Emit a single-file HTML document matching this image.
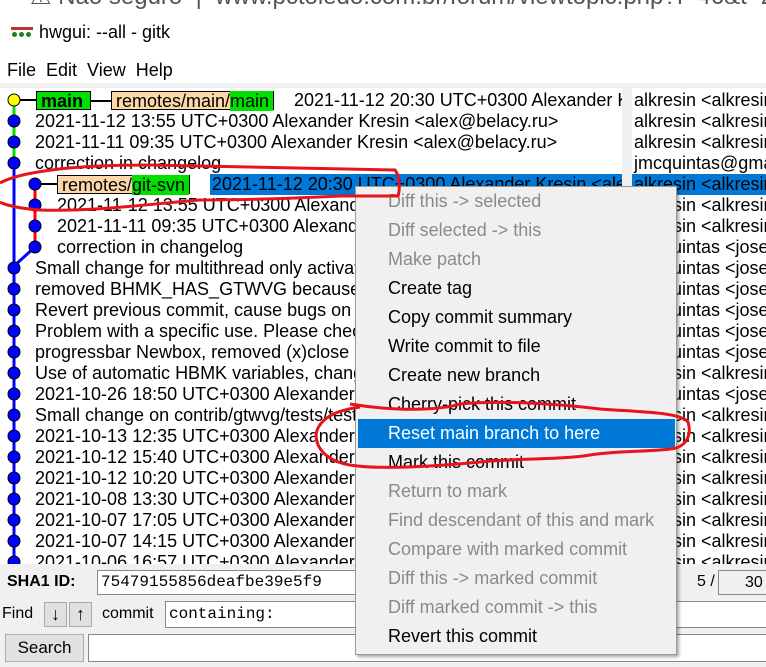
<!DOCTYPE html>
<html><head><meta charset="utf-8"><style>
*{margin:0;padding:0;box-sizing:border-box}
body{width:766px;height:667px;overflow:hidden;background:#f0f0f0;font-family:"Liberation Sans",Arial,sans-serif;position:relative;color:#000}
.abs{position:absolute;white-space:nowrap}
.t{font-size:18px;line-height:21px}
.menu{font-size:18px;line-height:29px;color:#000}
.dis{color:#8a8a8a}
</style></head><body>
<div class="abs" style="left:0;top:0;width:766px;height:10px;background:#fff;overflow:hidden">
<div class="abs" style="left:30px;top:-18px;font-size:24px;color:#555">⚠ Não seguro &nbsp;| &nbsp;www.pctoledo.com.br/forum/viewtopic.php?f=46&amp;t=26115&amp;</div></div>
<div class="abs" style="left:0;top:10px;width:766px;height:48px;background:#fff"></div>
<div class="abs" style="left:11px;top:27px;width:22px;height:12px">
<div class="abs" style="left:0;top:0;width:22px;height:3px;background:#c03030"></div>
<div class="abs" style="left:1px;top:5px;width:5px;height:5px;border-radius:50%;background:#208020"></div>
<div class="abs" style="left:8px;top:5px;width:5px;height:5px;border-radius:50%;background:#208020"></div>
<div class="abs" style="left:15px;top:5px;width:5px;height:5px;border-radius:50%;background:#208020"></div></div>
<div class="abs" style="left:39px;top:22px;font-size:18px">hwgui: --all - gitk</div>
<div class="abs" style="left:0;top:58px;width:766px;height:25px;background:#fff"></div>
<div class="abs" style="left:7px;top:60px;font-size:18px">File &nbsp;Edit &nbsp;View &nbsp;Help</div>
<div class="abs" style="left:0;top:88px;width:622px;height:476px;background:#fff;overflow:hidden">
<svg class="abs" style="left:0;top:0" width="60" height="476">
<line x1="14" y1="12" x2="14" y2="75" stroke="#00e000" stroke-width="3"/>
<line x1="14" y1="75" x2="14" y2="476" stroke="#0000ff" stroke-width="3"/>
<line x1="35" y1="96" x2="35" y2="159" stroke="#ff0000" stroke-width="3"/>
<line x1="14" y1="178" x2="35" y2="159" stroke="#0000ff" stroke-width="3"/>
<line x1="14" y1="12" x2="36" y2="12" stroke="#000" stroke-width="2"/>
<line x1="35" y1="96" x2="58" y2="96" stroke="#000" stroke-width="2"/>
<circle cx="14" cy="12" r="6" fill="#ffff00" stroke="#000"/>
<g fill="#0000ff" stroke="#000">
<circle cx="14" cy="33" r="6"/><circle cx="14" cy="54" r="6"/><circle cx="14" cy="75" r="6"/>
<circle cx="35" cy="96" r="6"/><circle cx="35" cy="117" r="6"/><circle cx="35" cy="138" r="6"/><circle cx="35" cy="159" r="6"/>
<circle cx="14" cy="180" r="6"/><circle cx="14" cy="201" r="6"/><circle cx="14" cy="222" r="6"/><circle cx="14" cy="243" r="6"/><circle cx="14" cy="264" r="6"/><circle cx="14" cy="285" r="6"/><circle cx="14" cy="306" r="6"/><circle cx="14" cy="327" r="6"/><circle cx="14" cy="348" r="6"/><circle cx="14" cy="369" r="6"/><circle cx="14" cy="390" r="6"/><circle cx="14" cy="411" r="6"/><circle cx="14" cy="432" r="6"/><circle cx="14" cy="453" r="6"/><circle cx="14" cy="474" r="6"/></g>
</svg>
<div class="abs t" style="left:36px;top:3px;height:19px;line-height:18px;width:55px;background:#00e000;border:1px solid #000;font-weight:bold;padding-left:4px">main</div>
<div class="abs" style="left:91px;top:12px;width:20px;height:2px;background:#000"></div>
<div class="abs t" style="left:111px;top:3px;height:19px;line-height:18px;border:1px solid #000;background:#fcd8a8;padding:0 4px">remotes/main/<span style="background:#00e000;margin-right:-4px;padding-right:4px">main</span></div>
<div class="abs t" style="left:294px;top:2px">2021-11-12 20:30 UTC+0300 Alexander Kresin</div>
<div class="abs t" style="left:35px;top:23px">2021-11-12 13:55 UTC+0300 Alexander Kresin &lt;alex@belacy.ru&gt;</div>
<div class="abs t" style="left:35px;top:44px">2021-11-11 09:35 UTC+0300 Alexander Kresin &lt;alex@belacy.ru&gt;</div>
<div class="abs t" style="left:35px;top:65px">correction in changelog</div>
<div class="abs t" style="left:57px;top:87px;height:19px;line-height:18px;border:1px solid #000;background:#fcd8a8;padding:0 4px">remotes/<span style="background:#00e000;margin-right:-4px;padding-right:4px">git-svn</span></div>
<div class="abs t" style="left:210px;top:86px;width:412px;background:#0078d7;padding-left:2px">2021-11-12 20:30 UTC+0300 Alexander Kresin &lt;alex@belacy.ru&gt;</div>
<div class="abs t" style="left:57px;top:107px">2021-11-12 13:55 UTC+0300 Alexander Kresin</div>
<div class="abs t" style="left:57px;top:128px">2021-11-11 09:35 UTC+0300 Alexander Kresin</div>
<div class="abs t" style="left:57px;top:149px">correction in changelog</div>
<div class="abs t" style="left:35px;top:170px;line-height:21px">Small change for multithread only activated<br>removed BHMK_HAS_GTWVG because<br>Revert previous commit, cause bugs on<br>Problem with a specific use. Please check<br>progressbar Newbox, removed (x)close and<br>Use of automatic HBMK variables, changes<br>2021-10-26 18:50 UTC+0300 Alexander Kresin<br>Small change on contrib/gtwvg/tests/test<br>2021-10-13 12:35 UTC+0300 Alexander Kresin<br>2021-10-12 15:40 UTC+0300 Alexander Kresin<br>2021-10-12 10:20 UTC+0300 Alexander Kresin<br>2021-10-08 13:30 UTC+0300 Alexander Kresin<br>2021-10-07 17:05 UTC+0300 Alexander Kresin<br>2021-10-07 14:15 UTC+0300 Alexander Kresin<br>2021-10-06 16:57 UTC+0300 Alexander Kresin</div>
</div>
<div class="abs" style="left:632px;top:88px;width:134px;height:476px;background:#fff;overflow:hidden">
<div class="abs t" style="left:0;top:86px;width:134px;height:21px;background:#0078d7"></div>
<div class="abs t" style="left:2px;top:2px;line-height:21px">alkresin &lt;alkresin<br>alkresin &lt;alkresin<br>alkresin &lt;alkresin<br>jmcquintas@gmail<br>alkresin &lt;alkresin<br>alkresin &lt;alkresin<br>alkresin &lt;alkresin<br>jmcquintas &lt;jose<br>jmcquintas &lt;jose<br>jmcquintas &lt;jose<br>jmcquintas &lt;jose<br>jmcquintas &lt;jose<br>jmcquintas &lt;jose<br>alkresin &lt;alkresin<br>jmcquintas &lt;jose<br>alkresin &lt;alkresin<br>alkresin &lt;alkresin<br>alkresin &lt;alkresin<br>alkresin &lt;alkresin<br>alkresin &lt;alkresin<br>alkresin &lt;alkresin<br>alkresin &lt;alkresin<br>alkresin &lt;alkresin</div>
</div>
<div class="abs" style="left:7px;top:573px;font-size:16px;font-weight:bold">SHA1 ID:</div>
<div class="abs" style="left:97px;top:570px;width:280px;height:25px;background:#fff;border:1px solid #888;font-family:'Liberation Mono',monospace;font-size:16px;line-height:23px;padding-left:3px">75479155856deafbe39e5f9</div>
<div class="abs" style="left:697px;top:573px;font-size:16px">5 /</div>
<div class="abs" style="left:718px;top:570px;width:60px;height:25px;background:#f0f0f0;border:1px solid #888;font-size:16px;line-height:23px;padding-left:26px">30</div>
<div class="abs" style="left:2px;top:605px;font-size:16px">Find</div>
<div class="abs" style="left:44px;top:602px;width:23px;height:25px;border:1px solid #aaa;background:#e0e0e0;font-size:18px;text-align:center;line-height:22px">↓</div>
<div class="abs" style="left:69px;top:602px;width:23px;height:25px;border:1px solid #aaa;background:#e0e0e0;font-size:18px;text-align:center;line-height:22px">↑</div>
<div class="abs" style="left:102px;top:605px;font-size:16px">commit</div>
<div class="abs" style="left:165px;top:601px;width:610px;height:27px;background:#fff;border:1px solid #888;font-family:'Liberation Mono',monospace;font-size:16px;line-height:25px;padding-left:3px">containing:</div>
<div class="abs" style="left:5px;top:634px;width:79px;height:28px;background:#e1e1e1;border:1px solid #adadad;font-size:17px;text-align:center;line-height:26px">Search</div>
<div class="abs" style="left:88px;top:634px;width:690px;height:28px;background:#fff;border:1px solid #888"></div>
<div class="abs" style="left:355px;top:186px;width:322px;height:469px;background:#f0f0f0;border:1px solid #999;box-shadow:2px 2px 3px rgba(0,0,0,.35)">
<div class="abs" style="left:2px;top:232px;width:317px;height:29px;background:#0078d7"></div>
<div class="abs menu" style="left:32px;top:0px"><span class="dis">Diff this -&gt; selected</span><br><span class="dis">Diff selected -&gt; this</span><br><span class="dis">Make patch</span><br>Create tag<br>Copy commit summary<br>Write commit to file<br>Create new branch<br>Cherry-pick this commit<br><span style="color:#fff">Reset main branch to here</span><br>Mark this commit<br><span class="dis">Return to mark</span><br><span class="dis">Find descendant of this and mark</span><br><span class="dis">Compare with marked commit</span><br><span class="dis">Diff this -&gt; marked commit</span><br><span class="dis">Diff marked commit -&gt; this</span><br>Revert this commit</div>
</div>
<svg class="abs" style="left:0;top:0" width="766" height="667" fill="none" stroke="#e8141c" stroke-width="3">
<path d="M0 183 C20 172 70 165 150 165 L395 170 C400 176 400 190 398 196 L340 196 C300 198 250 200 200 200 C150 204 90 212 40 210 C10 208 0 202 0 202"/>
<path d="M350 404 C400 412 440 410 460 404 C500 400 560 404 600 409 C640 412 680 412 688 422 C692 435 686 445 676 448 C660 452 620 450 590 455 C560 460 520 458 480 462 C440 466 380 470 350 465 C320 460 312 440 318 428 C325 415 340 410 360 407"/>
</svg>
</body></html>
